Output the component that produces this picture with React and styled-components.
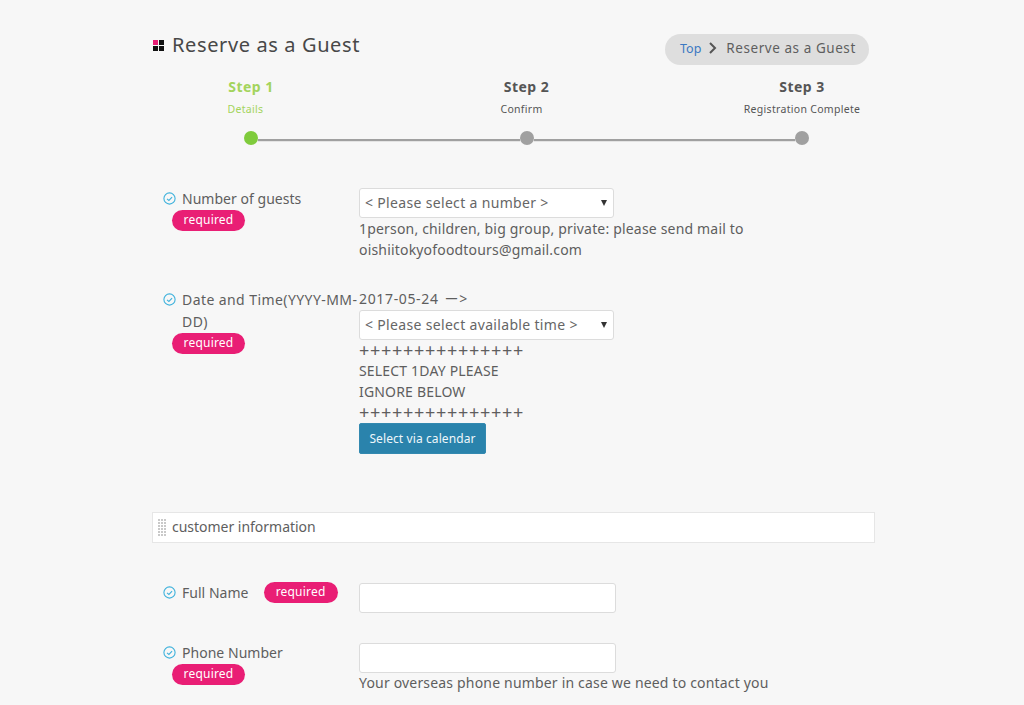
import React from "react";
import styled, { createGlobalStyle } from "styled-components";

const GlobalStyle = createGlobalStyle`
  html, body {
    margin: 0;
    padding: 0;
    height: 705px;
    overflow: hidden;
    background: #f7f7f7;
    color: #5e5e5e;
    font-family: "Noto Sans", "Noto Sans CJK JP", "DejaVu Sans", sans-serif;
    font-size: 14px;
    letter-spacing: 0.18px;
  }
  * { box-sizing: border-box; }
`;

const Page = styled.div`
  width: 723px;
  margin-left: 152px;
  padding-top: 34px;
`;

const Header = styled.header`
  display: flex;
  justify-content: space-between;
  align-items: flex-start;
  padding-right: 6px;
`;

const Title = styled.h1`
  display: flex;
  align-items: center;
  gap: 7px;
  margin: 0;
  height: 22px;
  font-size: 20px;
  font-weight: 400;
  line-height: 22px;
  color: #484848;
  letter-spacing: 0.62px;
`;

const Crumbs = styled.nav`
  display: flex;
  align-items: center;
  height: 31px;
  width: 204px;
  padding: 0 0 3px 15px;
  border-radius: 16px;
  background: #dedede;
  font-size: 13.5px;
  letter-spacing: 0.56px;
  color: #5e5e5e;
`;

const CrumbLink = styled.a`
  color: #3b78c2;
  font-size: 12.5px;
  letter-spacing: 0;
`;

const CrumbChevron = styled.svg`
  width: 10px;
  height: 12px;
  margin: 0 8px 0 7px;
`;

const Steps = styled.div`
  display: flex;
  justify-content: space-between;
  width: 671px;
  margin: 12px 0 0 39px;
`;

const Step = styled.div`
  width: 120px;
  text-align: center;
  color: ${(p) => (p.$active ? "#a3d45c" : "#555")};
`;

const StepTitle = styled.div`
  font-size: 14px;
  font-weight: 700;
  line-height: 20px;
  letter-spacing: 0.5px;
`;

const StepSub = styled.div`
  margin-top: 4px;
  padding-right: ${(p) => p.$shift || 0}px;
  font-size: 10.5px;
  line-height: 16px;
  letter-spacing: 0.3px;
`;

const Track = styled.div`
  display: flex;
  align-items: center;
  width: 565px;
  height: 14px;
  margin: 14px 0 0 92px;
`;

const Dot = styled.span`
  flex: none;
  width: 14px;
  height: 14px;
  border-radius: 50%;
  background: ${(p) => (p.$active ? "#7fcb3c" : "#a0a0a0")};
`;

const Line = styled.span`
  flex: 1;
  height: 2px;
  margin-top: 3px;
  background: #a0a0a0;
  box-shadow: 0 1px 0 #e4e4e4;
`;

const Form = styled.div`
  margin-top: 43px;
`;

const Row = styled.div`
  display: grid;
  grid-template-columns: 196px 257px;
  margin-left: 11px;
  margin-bottom: ${(p) => p.$gap || 0}px;
  line-height: 21px;
`;

const LabelCell = styled.div`
  margin-top: ${(p) => p.$top || 0}px;
`;

const LabelLine = styled.div`
  display: flex;
  align-items: flex-start;
  gap: 0 6px;
  line-height: 22px;
`;

const Check = styled.svg`
  flex: none;
  width: 13px;
  height: 13px;
  margin-top: 4px;
`;

const LabelText = styled.span`
  flex: ${(p) => (p.$inline ? "none" : 1)};
  white-space: nowrap;
  letter-spacing: ${(p) => (p.$wide ? "0.42px" : "0.03px")};
`;

const Required = styled.span`
  display: block;
  flex: none;
  width: ${(p) => (p.$inline ? "74px" : "73px")};
  height: 21px;
  margin-left: 9px;
  margin-top: ${(p) => (p.$inline ? "0" : "0")};
  border-radius: 11px;
  background: #e91e75;
  color: #fff;
  font-size: 12px;
  line-height: 20px;
  text-align: center;
  letter-spacing: 0.2px;
`;

const ValueCell = styled.div`
  white-space: nowrap;
`;

const SelectBox = styled.div`
  display: flex;
  align-items: center;
  justify-content: space-between;
  width: 255px;
  height: 30px;
  padding: 0 6px 2px 5px;
  border: 1px solid #dcdcdc;
  border-radius: 3px;
  background: #fff;
  color: #666;
  letter-spacing: 0.33px;
`;

const Caret = styled.span`
  width: 0;
  height: 0;
  margin-top: 2px;
  border-left: 3px solid transparent;
  border-right: 3px solid transparent;
  border-top: 6px solid #333;
`;

const Note = styled.div`
  margin-top: ${(p) => p.$top || 0}px;
  line-height: 21px;
`;

const DateLine = styled.div`
  display: flex;
  height: 21px;
  gap: 6px;
  margin-top: -1px;
  margin-bottom: 1px;
  line-height: 21px;
  letter-spacing: 0.65px;
`;

const NoteStack = styled.div`
  line-height: 20.75px;
`;

const Plus = styled.div`
  font-size: 18px;
  line-height: 20.75px;
  letter-spacing: 0.7px;
`;

const CalendarButton = styled.button`
  display: block;
  width: 127px;
  height: 31px;
  margin: 0;
  padding: 0;
  border: 1px solid #3389b0;
  border-radius: 2px;
  background: #2a83ac;
  color: #eef7fb;
  font: inherit;
  font-size: 12px;
  letter-spacing: 0.1px;
`;

const Section = styled.div`
  display: flex;
  align-items: center;
  gap: 5px;
  height: 31px;
  margin: 58px 0 40px;
  padding: 0 0 2px 5px;
  border: 1px solid #e6e6e6;
  background: #fff;
  color: #5e5e5e;
  letter-spacing: -0.02px;
`;

const Grip = styled.svg`
  width: 9px;
  height: 18px;
  margin-top: 2px;
`;

const TextInput = styled.input`
  display: block;
  width: 257px;
  height: 30px;
  padding: 0 6px;
  border: 1px solid #dcdcdc;
  border-radius: 3px;
  background: #fff;
`;

const CheckIcon = () => (
  <Check viewBox="0 0 13 13" fill="none" stroke="#3fb2dc">
    <circle cx="6.5" cy="6.5" r="5.6" strokeWidth="1.1" />
    <path d="M4 6.8l1.9 1.7 3.2-3.4" strokeWidth="1.1" />
  </Check>
);

const TitleMark = () => (
  <svg width="13" height="13" viewBox="0 0 13 13">
    <rect x="1" y="1" width="5" height="5" fill="#e91e75" />
    <rect x="7" y="1" width="5" height="5" fill="#111" />
    <rect x="1" y="7" width="5" height="5" fill="#111" />
    <rect x="7" y="7" width="5" height="5" fill="#111" />
  </svg>
);

const gripDots = [0, 1, 2, 3, 4, 5].flatMap((r) =>
  [0, 1, 2].map((c) => (
    <rect key={`${r}-${c}`} x={c * 3} y={r * 3} width="2" height="2" fill="#c9c9c9" />
  ))
);

export default function App() {
  return (
    <>
      <GlobalStyle />
      <Page>
        <Header>
          <Title>
            <TitleMark />
            Reserve as a Guest
          </Title>
          <Crumbs>
            <CrumbLink>Top</CrumbLink>
            <CrumbChevron viewBox="0 0 10 12" fill="none" stroke="#555" strokeWidth="2">
              <path d="M2 1l5 5-5 5" />
            </CrumbChevron>
            Reserve as a Guest
          </Crumbs>
        </Header>

        <Steps>
          <Step $active>
            <StepTitle>Step 1</StepTitle>
            <StepSub $shift={11}>Details</StepSub>
          </Step>
          <Step>
            <StepTitle>Step 2</StepTitle>
            <StepSub $shift={10}>Confirm</StepSub>
          </Step>
          <Step>
            <StepTitle>Step 3</StepTitle>
            <StepSub>Registration Complete</StepSub>
          </Step>
        </Steps>
        <Track>
          <Dot $active />
          <Line />
          <Dot />
          <Line />
          <Dot />
        </Track>

        <Form>
          <Row $gap={29}>
            <LabelCell>
              <LabelLine>
                <CheckIcon />
                <LabelText>Number of guests</LabelText>
              </LabelLine>
              <Required>required</Required>
            </LabelCell>
            <ValueCell>
              <SelectBox>
                &lt; Please select a number &gt;
                <Caret />
              </SelectBox>
              <Note>1person, children, big group, private: please send mail to</Note>
              <Note>oishiitokyofoodtours@gmail.com</Note>
            </ValueCell>
          </Row>

          <Row>
            <LabelCell>
              <LabelLine>
                <CheckIcon />
                <LabelText $wide>Date and Time(YYYY-MM-<br />DD)</LabelText>
              </LabelLine>
              <Required>required</Required>
            </LabelCell>
            <ValueCell>
              <DateLine>
                <span>2017-05-24</span>
                <span>ー&gt;</span>
              </DateLine>
              <SelectBox>
                &lt; Please select available time &gt;
                <Caret />
              </SelectBox>
              <NoteStack>
                <Plus>+++++++++++++++</Plus>
                <div>SELECT 1DAY PLEASE</div>
                <div>IGNORE BELOW</div>
                <Plus>+++++++++++++++</Plus>
              </NoteStack>
              <CalendarButton>Select via calendar</CalendarButton>
            </ValueCell>
          </Row>

          <Section>
            <Grip viewBox="0 0 9 18">{gripDots}</Grip>
            customer information
          </Section>

          <Row $gap={30}>
            <LabelCell $top={-1}>
              <LabelLine>
                <CheckIcon />
                <LabelText $inline>Full Name</LabelText>
                <Required $inline>required</Required>
              </LabelLine>
            </LabelCell>
            <ValueCell>
              <TextInput />
            </ValueCell>
          </Row>

          <Row>
            <LabelCell $top={-1}>
              <LabelLine>
                <CheckIcon />
                <LabelText>Phone Number</LabelText>
              </LabelLine>
              <Required>required</Required>
            </LabelCell>
            <ValueCell>
              <TextInput />
              <Note $top={-1}>Your overseas phone number in case we need to contact you</Note>
            </ValueCell>
          </Row>
        </Form>
      </Page>
    </>
  );
}
